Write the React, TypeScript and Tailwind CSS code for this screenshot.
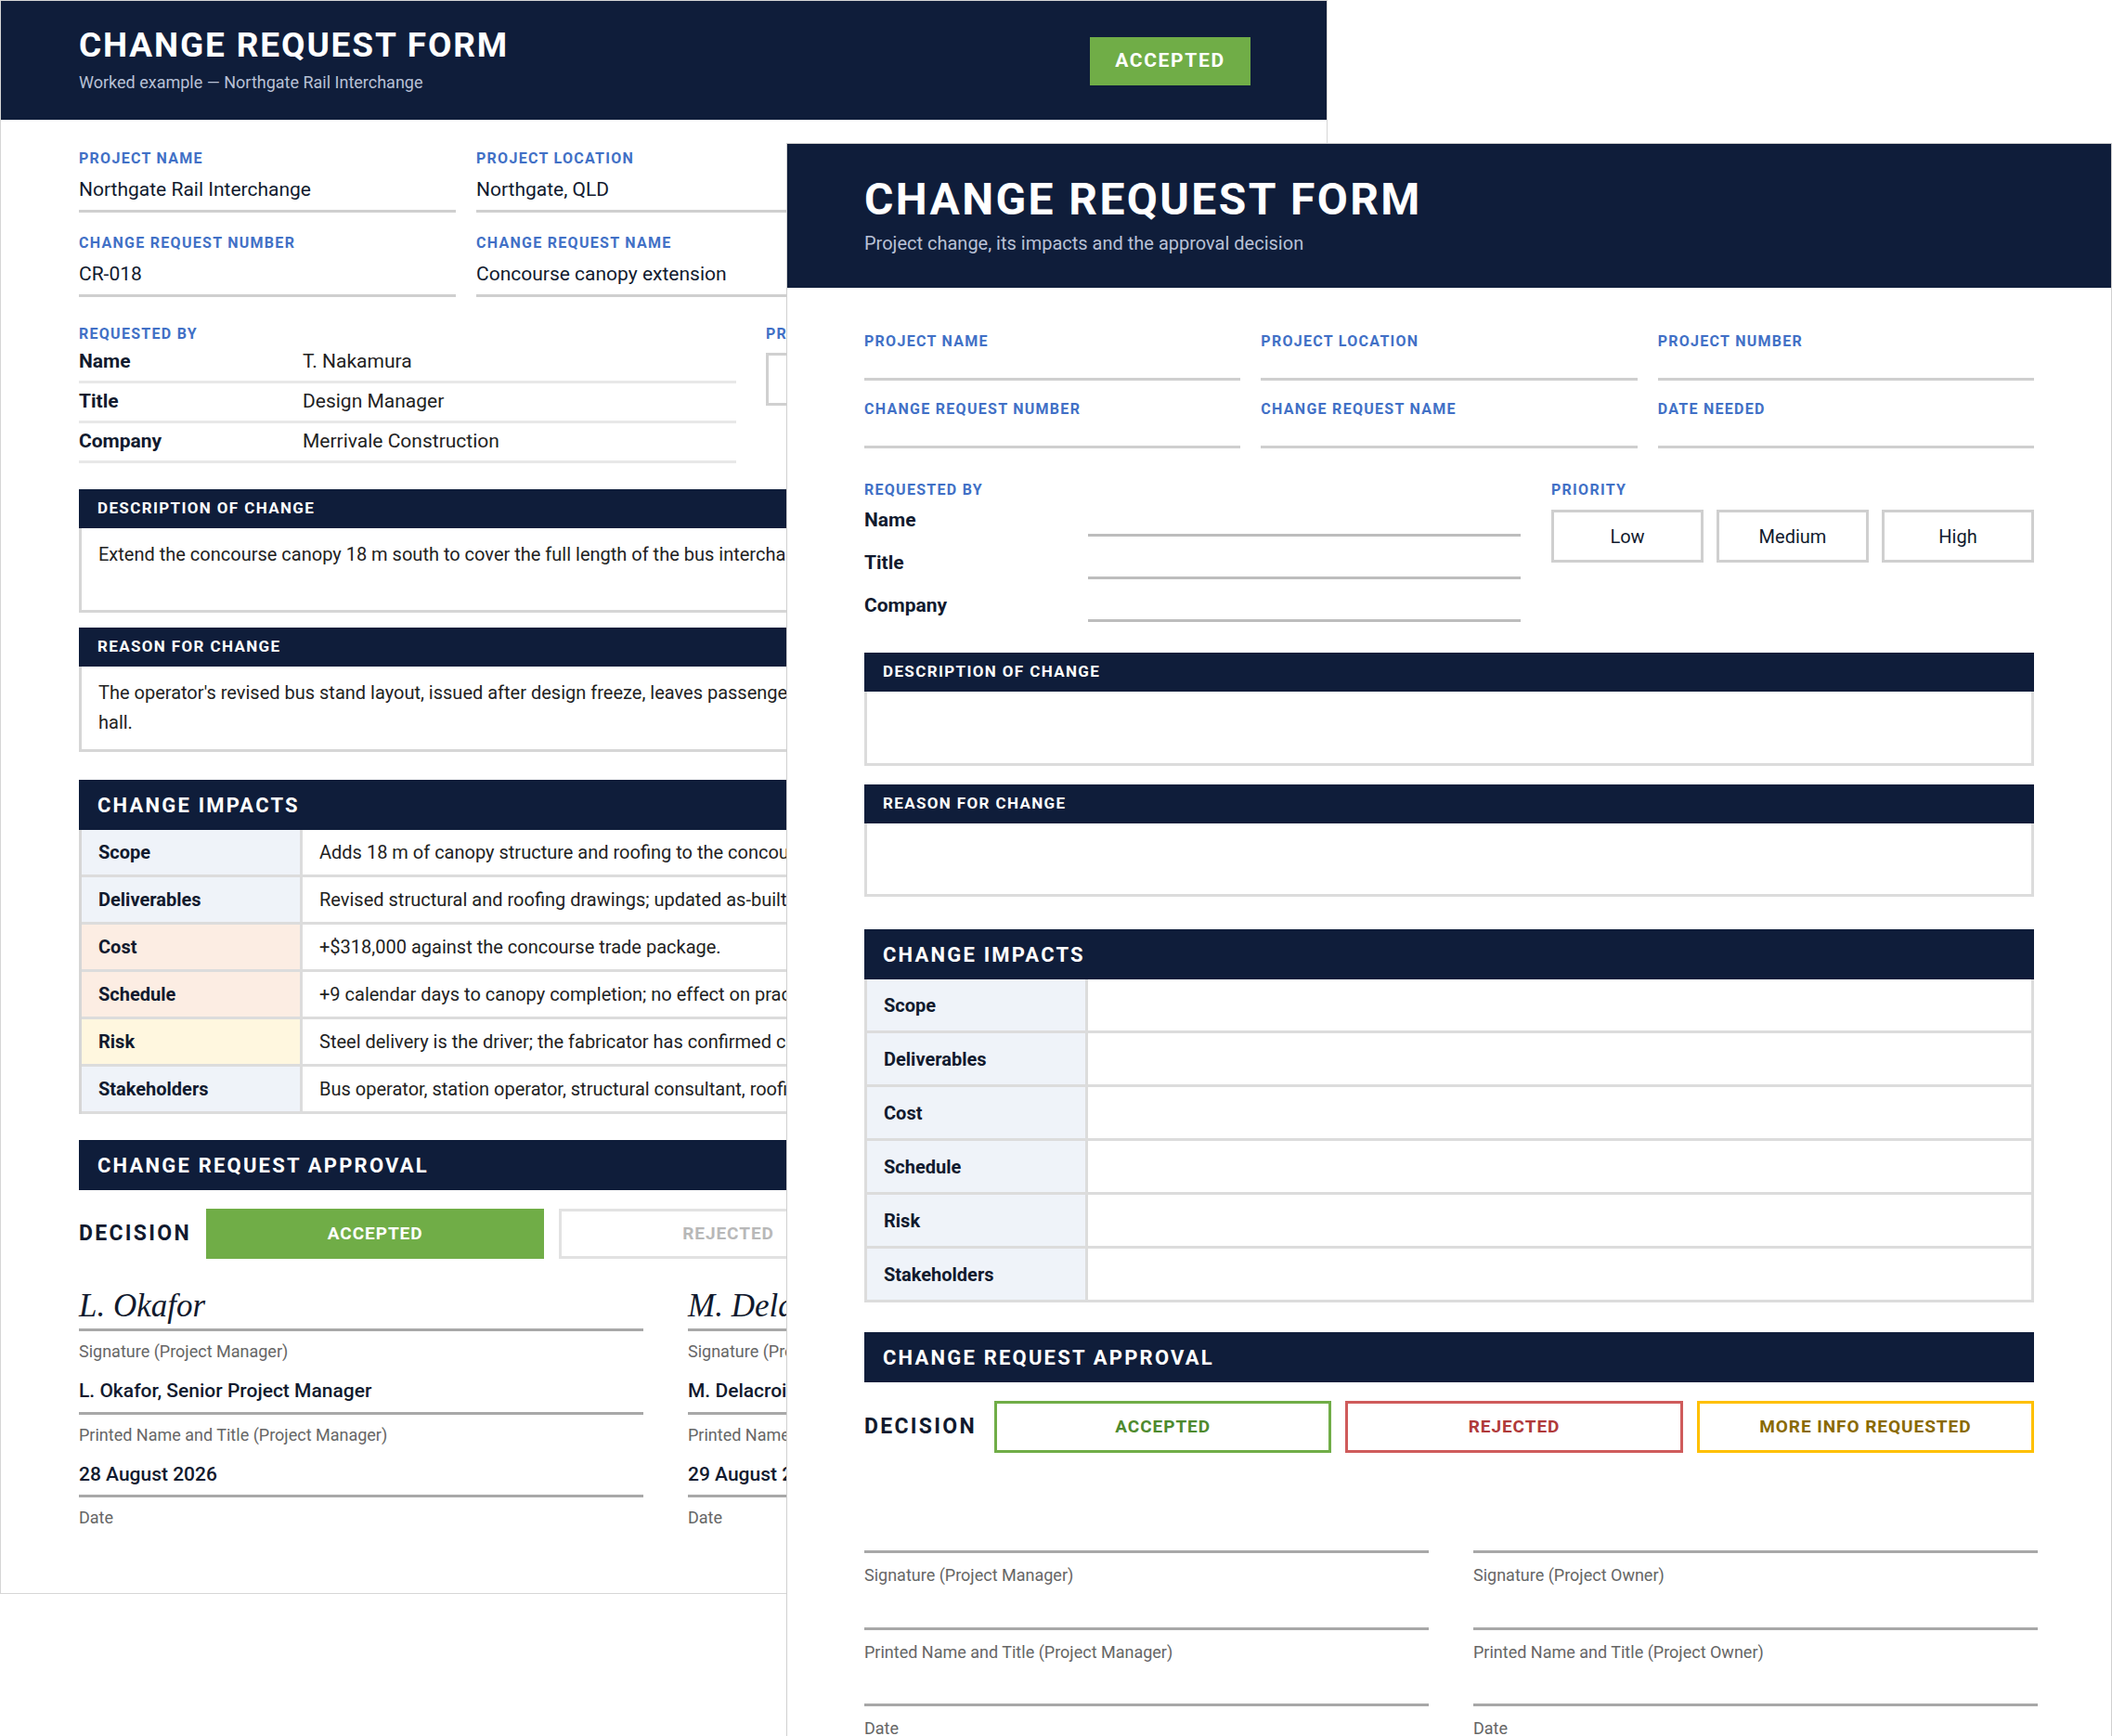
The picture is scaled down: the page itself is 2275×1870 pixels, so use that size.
const navy = "bg-[#0f1d3a]";

function Label({ children }: { children: React.ReactNode }) {
  return (
    <p className="text-[16px] leading-[20px] font-bold uppercase tracking-[0.08em] text-[#4170c6]">
      {children}
    </p>
  );
}

function BackField({ label, value }: { label: string; value: string }) {
  return (
    <div className="border-b-[3px] border-[#cfcfcf]">
      <Label>{label}</Label>
      <p className="mt-[8px] h-[37px] text-[21px] leading-[30px] text-[#111a2e]">{value}</p>
    </div>
  );
}

function FrontField({ label }: { label: string }) {
  return (
    <div className="h-[52px] border-b-[3px] border-[#cfcfcf]">
      <Label>{label}</Label>
    </div>
  );
}

function SectionBar({ children, big }: { children: React.ReactNode; big?: boolean }) {
  return (
    <div
      className={`${navy} flex items-center px-[20px] font-bold uppercase text-white ${
        big ? "h-[54px] text-[22px] tracking-[0.1em]" : "h-[42px] text-[17px] tracking-[0.08em]"
      }`}
    >
      {children}
    </div>
  );
}

const backImpacts = [
  ["Scope", "Adds 18 m of canopy structure and roofing to the concourse and bus interchange.", "bg-[#eff3f9]"],
  ["Deliverables", "Revised structural and roofing drawings; updated as-built records.", "bg-[#eff3f9]"],
  ["Cost", "+$318,000 against the concourse trade package.", "bg-[#fcede3]"],
  ["Schedule", "+9 calendar days to canopy completion; no effect on practical completion.", "bg-[#fcede3]"],
  ["Risk", "Steel delivery is the driver; the fabricator has confirmed capacity.", "bg-[#fff7df]"],
  ["Stakeholders", "Bus operator, station operator, structural consultant, roofing subcontractor.", "bg-[#eff3f9]"],
];

function BackPage() {
  return (
    <div className="relative h-[1717px] w-[1430px] overflow-hidden border border-[#d6d6d6] bg-white">
      <div className={`${navy} flex h-[128px] items-start justify-between px-[84px] pt-[26px]`}>
        <div>
          <h1 className="text-[37px] font-bold leading-[44px] tracking-[0.05em] text-white">CHANGE REQUEST FORM</h1>
          <p className="mt-[4px] text-[18px] text-[#b8c1d6]">Worked example — Northgate Rail Interchange</p>
        </div>
        <div className="mt-[13px] mr-[-2px] flex h-[52px] w-[173px] items-center justify-center bg-[#70ad47] text-[21px] font-bold tracking-[0.08em] text-white">
          ACCEPTED
        </div>
      </div>
      <div className="ml-[84px] w-[1262px]">
        <div className="mt-[32px] grid grid-cols-3 gap-x-[22px] gap-y-[23px]">
          <BackField label="Project Name" value="Northgate Rail Interchange" />
          <BackField label="Project Location" value="Northgate, QLD" />
          <BackField label="Project Number" value="NRI-2026-04" />
          <BackField label="Change Request Number" value="CR-018" />
          <BackField label="Change Request Name" value="Concourse canopy extension" />
          <BackField label="Date Needed" value="30 August 2026" />
        </div>
        <div className="mt-[30px] flex gap-[32px]">
          <div className="w-[708px]">
            <Label>Requested by</Label>
            {[
              ["Name", "T. Nakamura"],
              ["Title", "Design Manager"],
              ["Company", "Merrivale Construction"],
            ].map(([k, v]) => (
              <div key={k} className="flex h-[43px] items-center border-b-[3px] border-[#e8e8e8] text-[21px]">
                <span className="w-[241px] font-bold text-[#111a2e]">{k}</span>
                <span className="text-[#222]">{v}</span>
              </div>
            ))}
          </div>
          <div className="flex-1">
            <Label>Priority</Label>
            <div className="mt-[10px] flex gap-[14px]">
              <div className="h-[57px] flex-1 border-[3px] border-[#d0d0d0]" />
              <div className="h-[57px] flex-1 border-[3px] border-[#d0d0d0]" />
            </div>
          </div>
        </div>
        <div className="mt-[28px]">
          <SectionBar>Description of change</SectionBar>
          <div className="h-[91px] border-x-[3px] border-b-[3px] border-[#d6d6d6] px-[18px] pt-[12px] text-[20px] leading-[32px] text-[#222]">
            Extend the concourse canopy 18 m south to cover the full length of the bus interchange, including new
            roof sheeting and stormwater.
          </div>
        </div>
        <div className="mt-[16px]">
          <SectionBar>Reason for change</SectionBar>
          <div className="h-[92px] border-x-[3px] border-b-[3px] border-[#d6d6d6] px-[18px] pt-[12px] text-[20px] leading-[32px] text-[#222]">
            The operator's revised bus stand layout, issued after design freeze, leaves passengers uncovered between the stands and the
            ticketing hall.
          </div>
        </div>
        <div className="mt-[30px]">
          <SectionBar big>Change impacts</SectionBar>
          <div className="border-x-[3px] border-[#d6d6d6]">
            {backImpacts.map(([k, v, bg]) => (
              <div key={k} className="flex h-[51px] border-b-[3px] border-[#dcdcdc] text-[20px]">
                <div className={`${bg} flex w-[238px] items-center border-r-[3px] border-[#dcdcdc] px-[18px] font-bold text-[#111a2e]`}>{k}</div>
                <div className="flex items-center whitespace-nowrap px-[18px] text-[#222]">{v}</div>
              </div>
            ))}
          </div>
        </div>
        <div className="mt-[28px]">
          <SectionBar big>Change request approval</SectionBar>
          <div className="mt-[20px] flex h-[54px] items-center gap-[16px]">
            <span className="w-[121px] text-[23px] font-bold tracking-[0.1em] text-[#111a2e]">DECISION</span>
            <div className="flex h-full w-[365px] items-center justify-center bg-[#70ad47] text-[19px] font-bold tracking-[0.05em] text-white">ACCEPTED</div>
            <div className="flex h-full w-[365px] items-center justify-center border-[3px] border-[#e2e2e2] text-[19px] font-bold tracking-[0.05em] text-[#b8b8b8]">REJECTED</div>
            <div className="flex h-full w-[365px] items-center justify-center border-[3px] border-[#e2e2e2] text-[19px] font-bold tracking-[0.05em] text-[#b8b8b8]">MORE INFO REQUESTED</div>
          </div>
          <div className="mt-[28px] grid grid-cols-[608px_608px] gap-x-[48px]">
            {[
              ["L. Okafor", "Project Manager", "L. Okafor, Senior Project Manager", "28 August 2026"],
              ["M. Delacroix", "Project Owner", "M. Delacroix, Project Director", "29 August 2026"],
            ].map(([sig, role, name, date]) => (
              <div key={sig}>
                <div className="flex h-[50px] items-end border-b-[3px] border-[#a8a8a8] pb-[2px] text-[35px] italic leading-[44px] text-[#111a2e] [font-family:Liberation_Serif,serif]">
                  {sig}
                </div>
                <p className="mt-[8px] text-[18px] text-[#666]">Signature ({role})</p>
                <div className="mt-[14px] border-b-[3px] border-[#a8a8a8] pb-[6px] text-[21px] font-medium text-[#111a2e]">{name}</div>
                <p className="mt-[8px] text-[18px] text-[#666]">Printed Name and Title ({role})</p>
                <div className="mt-[14px] border-b-[3px] border-[#a8a8a8] pb-[6px] text-[21px] font-medium text-[#111a2e]">{date}</div>
                <p className="mt-[8px] text-[18px] text-[#666]">Date</p>
              </div>
            ))}
          </div>
        </div>
      </div>
    </div>
  );
}

const frontImpacts = ["Scope", "Deliverables", "Cost", "Schedule", "Risk", "Stakeholders"];

function FrontPage() {
  return (
    <div className="absolute left-[847px] top-[154px] w-[1428px] border border-[#d0d0d0] bg-white pb-[40px]">
      <div className={`${navy} h-[155px] px-[83px] pt-[32px]`}>
        <h1 className="text-[48px] font-bold leading-[56px] tracking-[0.05em] text-white">CHANGE REQUEST FORM</h1>
        <p className="mt-[4px] text-[20px] text-[#b8c1d6]">Project change, its impacts and the approval decision</p>
      </div>
      <div className="px-[83px]">
        <div className="mt-[48px] grid grid-cols-3 gap-x-[22px] gap-y-[21px]">
          <FrontField label="Project Name" />
          <FrontField label="Project Location" />
          <FrontField label="Project Number" />
          <FrontField label="Change Request Number" />
          <FrontField label="Change Request Name" />
          <FrontField label="Date Needed" />
        </div>
        <div className="mt-[35px] flex gap-[33px]">
          <div className="w-[707px]">
            <Label>Requested by</Label>
            {["Name", "Title", "Company"].map((k, i) => (
              <div key={k} className={`flex items-end ${i === 0 ? "h-[40px]" : "h-[46px]"}`}>
                <span className="w-[241px] pb-[2px] text-[21px] font-bold text-[#111a2e]">{k}</span>
                <span className="h-full flex-1 border-b-[3px] border-[#bdbdbd]" />
              </div>
            ))}
          </div>
          <div className="flex-1">
            <Label>Priority</Label>
            <div className="mt-[11px] flex gap-[14px]">
              {["Low", "Medium", "High"].map((p) => (
                <div key={p} className="flex h-[57px] flex-1 items-center justify-center border-[3px] border-[#cfcfcf] text-[20px] text-[#111a2e]">
                  {p}
                </div>
              ))}
            </div>
          </div>
        </div>
        <div className="mt-[33px]">
          <SectionBar>Description of change</SectionBar>
          <div className="h-[80px] border-x-[3px] border-b-[3px] border-[#dcdcdc]" />
        </div>
        <div className="mt-[20px]">
          <SectionBar>Reason for change</SectionBar>
          <div className="h-[79px] border-x-[3px] border-b-[3px] border-[#dcdcdc]" />
        </div>
        <div className="mt-[35px]">
          <SectionBar big>Change impacts</SectionBar>
          <div className="border-x-[3px] border-[#dcdcdc]">
            {frontImpacts.map((k) => (
              <div key={k} className="flex h-[58px] border-b-[3px] border-[#dcdcdc]">
                <div className="flex w-[238px] items-center border-r-[3px] border-[#dcdcdc] bg-[#eff3f9] px-[18px] text-[20px] font-bold text-[#111a2e]">
                  {k}
                </div>
              </div>
            ))}
          </div>
        </div>
        <div className="mt-[32px]">
          <SectionBar big>Change request approval</SectionBar>
          <div className="mt-[20px] flex h-[56px] items-center gap-[15px]">
            <span className="w-[125px] text-[23px] font-bold tracking-[0.1em] text-[#111a2e]">DECISION</span>
            <div className="flex h-full flex-1 items-center justify-center border-[3px] border-[#70ad47] text-[19px] font-bold tracking-[0.05em] text-[#4e8a2e]">ACCEPTED</div>
            <div className="flex h-full flex-1 items-center justify-center border-[3px] border-[#cf5b5b] text-[19px] font-bold tracking-[0.05em] text-[#b03a3a]">REJECTED</div>
            <div className="flex h-full flex-1 items-center justify-center border-[3px] border-[#ffc000] text-[19px] font-bold tracking-[0.05em] text-[#8a6a00]">MORE INFO REQUESTED</div>
          </div>
          <div className="mt-[105px] grid grid-cols-[608px_608px] gap-x-[48px]">
            {["Project Manager", "Project Owner"].map((role) => (
              <div key={role}>
                <div className="border-b-[3px] border-[#a8a8a8]" />
                <p className="mt-[10px] h-[70px] text-[18px] text-[#666]">Signature ({role})</p>
                <div className="border-b-[3px] border-[#a8a8a8]" />
                <p className="mt-[10px] h-[69px] text-[18px] text-[#666]">Printed Name and Title ({role})</p>
                <div className="border-b-[3px] border-[#a8a8a8]" />
                <p className="mt-[10px] text-[18px] text-[#666]">Date</p>
              </div>
            ))}
          </div>
        </div>
      </div>
    </div>
  );
}

export default function App() {
  return (
    <div className="relative h-[1870px] w-[2275px] overflow-hidden bg-white [font-family:Roboto,sans-serif]">
      <BackPage />
      <FrontPage />
    </div>
  );
}
